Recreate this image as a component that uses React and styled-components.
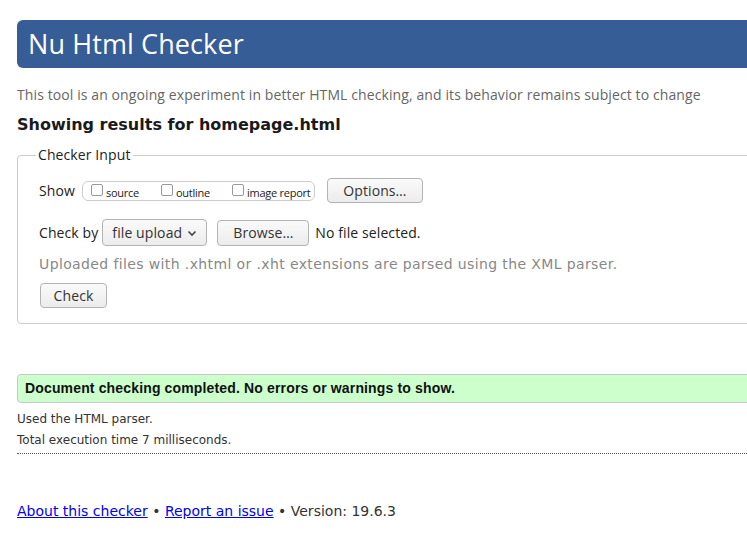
import React from 'react';
import styled, { createGlobalStyle } from 'styled-components';

const GlobalStyle = createGlobalStyle`
  html, body {
    margin: 0;
    padding: 0;
    background: #fff;
    overflow: hidden;
  }
  body {
    font-family: "Open Sans", "DejaVu Sans", sans-serif;
    color: #222;
  }
`;

const ui = `"Open Sans", "Noto Sans", sans-serif`;
const dejavu = `"DejaVu Sans", "Verdana", sans-serif`;

const Page = styled.div`
  width: 820px;
  padding: 20px 0 0 17px;
`;

const Banner = styled.h1`
  margin: 0;
  height: 48px;
  background: #365d95;
  border-radius: 6px;
  color: #fff;
  font-family: ${ui};
  font-weight: 400;
  font-size: 27px;
  line-height: 48px;
  padding-left: 11px;
  letter-spacing: 0.1px;
`;

const Tagline = styled.p`
  margin: 17px 0 0;
  font-family: ${ui};
  font-size: 14px;
  line-height: 20px;
  color: #666;
  letter-spacing: 0.1px;
`;

const Results = styled.h2`
  margin: 10px 0 0;
  font-family: ${dejavu};
  font-size: 16px;
  font-weight: 700;
  line-height: 20px;
  color: #1a1a1a;
`;

const Fieldset = styled.fieldset`
  margin: 11px 0 0;
  padding: 0 0 15px 18px;
  border: 1px solid #ccc;
  border-radius: 4px;
  min-width: 0;
`;

const Legend = styled.legend`
  padding: 0 2px;
  font-family: ${ui};
  font-size: 14px;
  line-height: 18px;
  color: #222;
  letter-spacing: 0.1px;
`;

const Row = styled.div`
  display: flex;
  align-items: center;
  gap: 8px;
  margin-top: ${p => p.$top || 0}px;
  padding-left: ${p => p.$indent ?? 3}px;
  font-family: ${ui};
  font-size: 14px;
  color: #222;
  letter-spacing: 0.1px;
  white-space: nowrap;
`;

const Label = styled.span`
  margin-right: ${p => p.$space || 0}px;
`;

const CheckGroup = styled.div`
  display: flex;
  align-items: flex-start;
  flex-shrink: 0;
  width: 233px;
  height: 20px;
  box-sizing: border-box;
  border: 1px solid #ccc;
  border-radius: 6px;
  padding: 1px 0 0 8px;
  margin-left: -1px;
  margin-right: 4px;
  overflow: hidden;
`;

const CheckItem = styled.label`
  display: flex;
  align-items: flex-start;
  flex-shrink: 0;
  margin-right: ${p => p.$space}px;
  font-size: 11px;
  letter-spacing: -0.25px;
  color: #222;
`;

const Box = styled.span`
  width: 10px;
  height: 10px;
  border: 1px solid #999;
  border-radius: 2px;
  background: #fff;
  margin: 1px 3px 0 0;
`;

const CheckText = styled.span`
  margin-top: 2px;
  line-height: 15px;
`;

const Button = styled.button`
  box-sizing: border-box;
  flex-shrink: 0;
  width: ${p => p.$w}px;
  height: ${p => p.$h || 25}px;
  padding: 0;
  border: 1px solid #b3b3b3;
  border-radius: 4px;
  background: linear-gradient(#fafafa, #ececec);
  font-family: ${ui};
  font-size: 14px;
  color: #333;
  letter-spacing: 0.1px;
`;

const Select = styled.div`
  box-sizing: border-box;
  flex-shrink: 0;
  width: 105px;
  height: 27px;
  display: flex;
  align-items: center;
  justify-content: space-between;
  padding: 0 9px;
  border: 1px solid #b3b3b3;
  border-radius: 4px;
  background: linear-gradient(#fafafa, #ececec);
  color: #333;
  margin-left: -4px;
  margin-right: 2px;
`;

const FileName = styled.span`
  margin-left: -2px;
`;

const Hint = styled.p`
  margin: 8px 0 0;
  padding-left: 3px;
  font-family: ${dejavu};
  font-size: 14px;
  line-height: 20px;
  color: #888;
  letter-spacing: 0.38px;
`;

const Notice = styled.div`
  margin-top: 50px;
  height: 29px;
  box-sizing: border-box;
  background: #ccffcc;
  border: 1px solid #c8c8c8;
  border-radius: 4px;
  padding-left: 7px;
  font-family: "Liberation Sans", Arial, sans-serif;
  font-weight: 700;
  font-size: 14px;
  line-height: 27px;
  color: #111;
  letter-spacing: 0.15px;
`;

const Detail = styled.p`
  margin: ${p => p.$top}px 0 0;
  font-family: ${dejavu};
  font-size: 12px;
  line-height: 16px;
  color: #333;
`;

const Divider = styled.hr`
  margin: 5px 0 0;
  border: 0;
  border-top: 1px dotted #555;
`;

const Footer = styled.p`
  margin: 47px 0 0;
  font-family: ${dejavu};
  font-size: 14px;
  line-height: 20px;
  color: #333;
`;

const Link = styled.a`
  color: #0000ee;
  text-decoration: underline;
`;

const Chevron = () => (
  <svg width="10" height="8" viewBox="0 0 10 8">
    <path d="M1.5 2.5 L5 6 L8.5 2.5" fill="none" stroke="#444" strokeWidth="1.6" />
  </svg>
);

const Check = ({ label, space }) => (
  <CheckItem $space={space}>
    <Box />
    <CheckText>{label}</CheckText>
  </CheckItem>
);

export default function App() {
  return (
    <Page>
      <GlobalStyle />
      <Banner>Nu Html Checker</Banner>
      <Tagline>
        This tool is an ongoing experiment in better HTML checking, and its behavior remains subject to change
      </Tagline>
      <Results>Showing results for homepage.html</Results>

      <Fieldset>
        <Legend>Checker Input</Legend>
        <Row $top={14}>
          <Label>Show</Label>
          <CheckGroup>
            <Check label="source" space={22} />
            <Check label="outline" space={22} />
            <Check label="image report" space={0} />
          </CheckGroup>
          <Button $w={96} $h={25}>Options…</Button>
        </Row>
        <Row $top={16}>
          <Label>Check by</Label>
          <Select>
            <span>file upload</span>
            <Chevron />
          </Select>
          <Button $w={92} $h={26}>Browse…</Button>
          <FileName>No file selected.</FileName>
        </Row>
        <Hint>Uploaded files with .xhtml or .xht extensions are parsed using the XML parser.</Hint>
        <Row $top={9} $indent={4}>
          <Button $w={67} $h={25}>Check</Button>
        </Row>
      </Fieldset>

      <Notice>Document checking completed. No errors or warnings to show.</Notice>
      <Detail $top={8}>Used the HTML parser.</Detail>
      <Detail $top={5}>Total execution time 7 milliseconds.</Detail>
      <Divider />

      <Footer>
        <Link href="#">About this checker</Link> • <Link href="#">Report an issue</Link> • Version: 19.6.3
      </Footer>
    </Page>
  );
}
